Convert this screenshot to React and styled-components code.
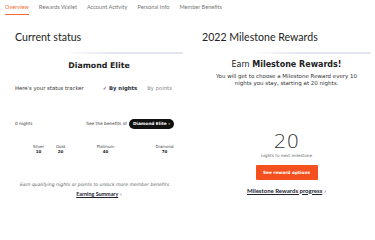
import React from 'react';
import styled, { createGlobalStyle } from 'styled-components';

const GlobalStyle = createGlobalStyle`
  body {
    margin: 0;
    background: #fff;
    font-family: Lato, "Liberation Sans", sans-serif;
    color: #222;
  }
`;

const wide = `"DejaVu Sans", Verdana, sans-serif`;

const Page = styled.div`
  width: 375px;
  height: 219px;
  overflow: hidden;
`;

const Tabs = styled.nav`
  display: flex;
  gap: 10px;
  padding: 3px 0 0 5px;
  height: 12px;
`;

const Tab = styled.span`
  font-size: 5.6px;
  line-height: 8px;
  color: ${p => (p.active ? '#f26b35' : '#777')};
  border-bottom: 1.5px solid ${p => (p.active ? '#f26b35' : 'transparent')};
  padding-bottom: 2px;
  white-space: nowrap;
`;

const Columns = styled.div`
  display: grid;
  grid-template-columns: 187px 188px;
`;

const Panel = styled.section`
  display: flex;
  flex-direction: column;
  padding: 0 4px 0 15px;
`;

const Heading = styled.h2`
  margin: 15px 0 0;
  font-size: 10.6px;
  font-weight: 400;
  line-height: 14px;
  color: #222;
`;

const Rule = styled.div`
  margin: 8px 0 0 50px;
  height: 1.5px;
  background: linear-gradient(to right, rgba(225, 228, 235, 0), #e3e6ee 40%);
`;

const Tier = styled.div`
  margin-top: 7px;
  text-align: center;
  font-family: ${wide};
  font-size: 7.8px;
  font-weight: 700;
  color: #222;
`;

const TrackerRow = styled.div`
  display: flex;
  align-items: center;
  margin-top: 15px;
  font-family: ${wide};
  font-size: 5.3px;
  color: #333;
`;

const Toggle = styled.span`
  margin-left: ${p => p.gap}px;
  color: ${p => (p.active ? '#2a3040' : '#888')};
  font-weight: ${p => (p.active ? 700 : 400)};
`;

const NightsRow = styled.div`
  display: flex;
  align-items: center;
  margin: 28px 9px 0 0;
  font-family: ${wide};
  font-size: 4.3px;
  color: #333;
`;

const Spacer = styled.div`
  flex: 1;
`;

const Pill = styled.span`
  margin-left: 2px;
  background: #111;
  color: #fff;
  border-radius: 6px;
  padding: 2.5px 4px;
  font-size: 4.3px;
  font-weight: 700;
  line-height: 5px;
`;

const Levels = styled.div`
  position: relative;
  height: 14px;
  margin-top: 15px;
`;

const Level = styled.div`
  position: absolute;
  left: ${p => p.x}px;
  transform: translateX(-50%);
  text-align: center;
  font-family: ${wide};
  font-size: 4px;
  line-height: 5px;
  color: #444;

  b {
    display: block;
    color: #222;
  }
`;

const Note = styled.p`
  margin: 24px 9px 0 0;
  text-align: center;
  font-family: ${wide};
  font-size: 4.6px;
  font-style: italic;
  color: #666;
  white-space: nowrap;
`;

const TextLink = styled.a`
  align-self: center;
  margin-top: ${p => p.top}px;
  font-size: ${p => p.size}px;
  font-weight: 700;
  color: #223;
  text-decoration: underline;
  text-underline-offset: 1px;

  span {
    text-decoration: none;
    display: inline-block;
    margin-left: 2px;
    font-weight: 400;
  }
`;

const EarnTitle = styled.div`
  margin-top: 6px;
  text-align: center;
  font-family: ${wide};
  font-size: 8px;
  color: #222;
`;

const Blurb = styled.p`
  margin: 4px 0 0;
  text-align: center;
  font-family: ${wide};
  font-size: 5.5px;
  line-height: 7.5px;
  color: #333;
  white-space: nowrap;
`;

const BigNumber = styled.div`
  margin-top: 44px;
  text-align: center;
  font-family: ${wide};
  font-size: 20px;
  font-weight: 300;
  line-height: 18px;
  color: #333;
`;

const Caption = styled.div`
  margin-top: 3px;
  text-align: center;
  font-family: ${wide};
  font-size: 4.2px;
  color: #666;
`;

const Button = styled.button`
  align-self: center;
  margin-top: 7px;
  width: 62px;
  height: 15px;
  border: 0;
  border-radius: 1px;
  background: #f4511e;
  color: #fff;
  font-family: ${wide};
  font-size: 4.3px;
  font-weight: 700;
  padding: 0;
`;

const levels = [
  { name: 'Silver', value: 10, x: 23.5 },
  { name: 'Gold', value: 20, x: 45.5 },
  { name: 'Platinum', value: 40, x: 90.5 },
  { name: 'Diamond', value: 70, x: 149.5 }
];

const App = () => (
  <>
    <GlobalStyle />
    <Page>
      <Tabs>
        <Tab active>Overview</Tab>
        <Tab>Rewards Wallet</Tab>
        <Tab>Account Activity</Tab>
        <Tab>Personal Info</Tab>
        <Tab>Member Benefits</Tab>
      </Tabs>
      <Columns>
        <Panel>
          <Heading>Current status</Heading>
          <Rule />
          <Tier>Diamond Elite</Tier>
          <TrackerRow>
            Here's your status tracker
            <Toggle gap={19} active>✓ By nights</Toggle>
            <Toggle gap={10}>By points</Toggle>
          </TrackerRow>
          <NightsRow>
            0 nights
            <Spacer />
            See the benefits of
            <Pill>Diamond Elite ›</Pill>
          </NightsRow>
          <Levels>
            {levels.map(l => (
              <Level key={l.name} x={l.x}>
                {l.name}
                <b>{l.value}</b>
              </Level>
            ))}
          </Levels>
          <Note>Earn qualifying nights or points to unlock more member benefits</Note>
          <TextLink top={4} size={5.4}>Earning Summary<span>›</span></TextLink>
        </Panel>
        <Panel>
          <Heading>2022 Milestone Rewards</Heading>
          <Rule />
          <EarnTitle>Earn <b>Milestone Rewards!</b></EarnTitle>
          <Blurb>
            You will get to choose a Milestone Reward every 10<br />
            nights you stay, starting at 20 nights.
          </Blurb>
          <BigNumber>20</BigNumber>
          <Caption>nights to next milestone</Caption>
          <Button>See reward options</Button>
          <TextLink top={7} size={6}>Milestone Rewards progress<span>›</span></TextLink>
        </Panel>
      </Columns>
    </Page>
  </>
);

export default App;
